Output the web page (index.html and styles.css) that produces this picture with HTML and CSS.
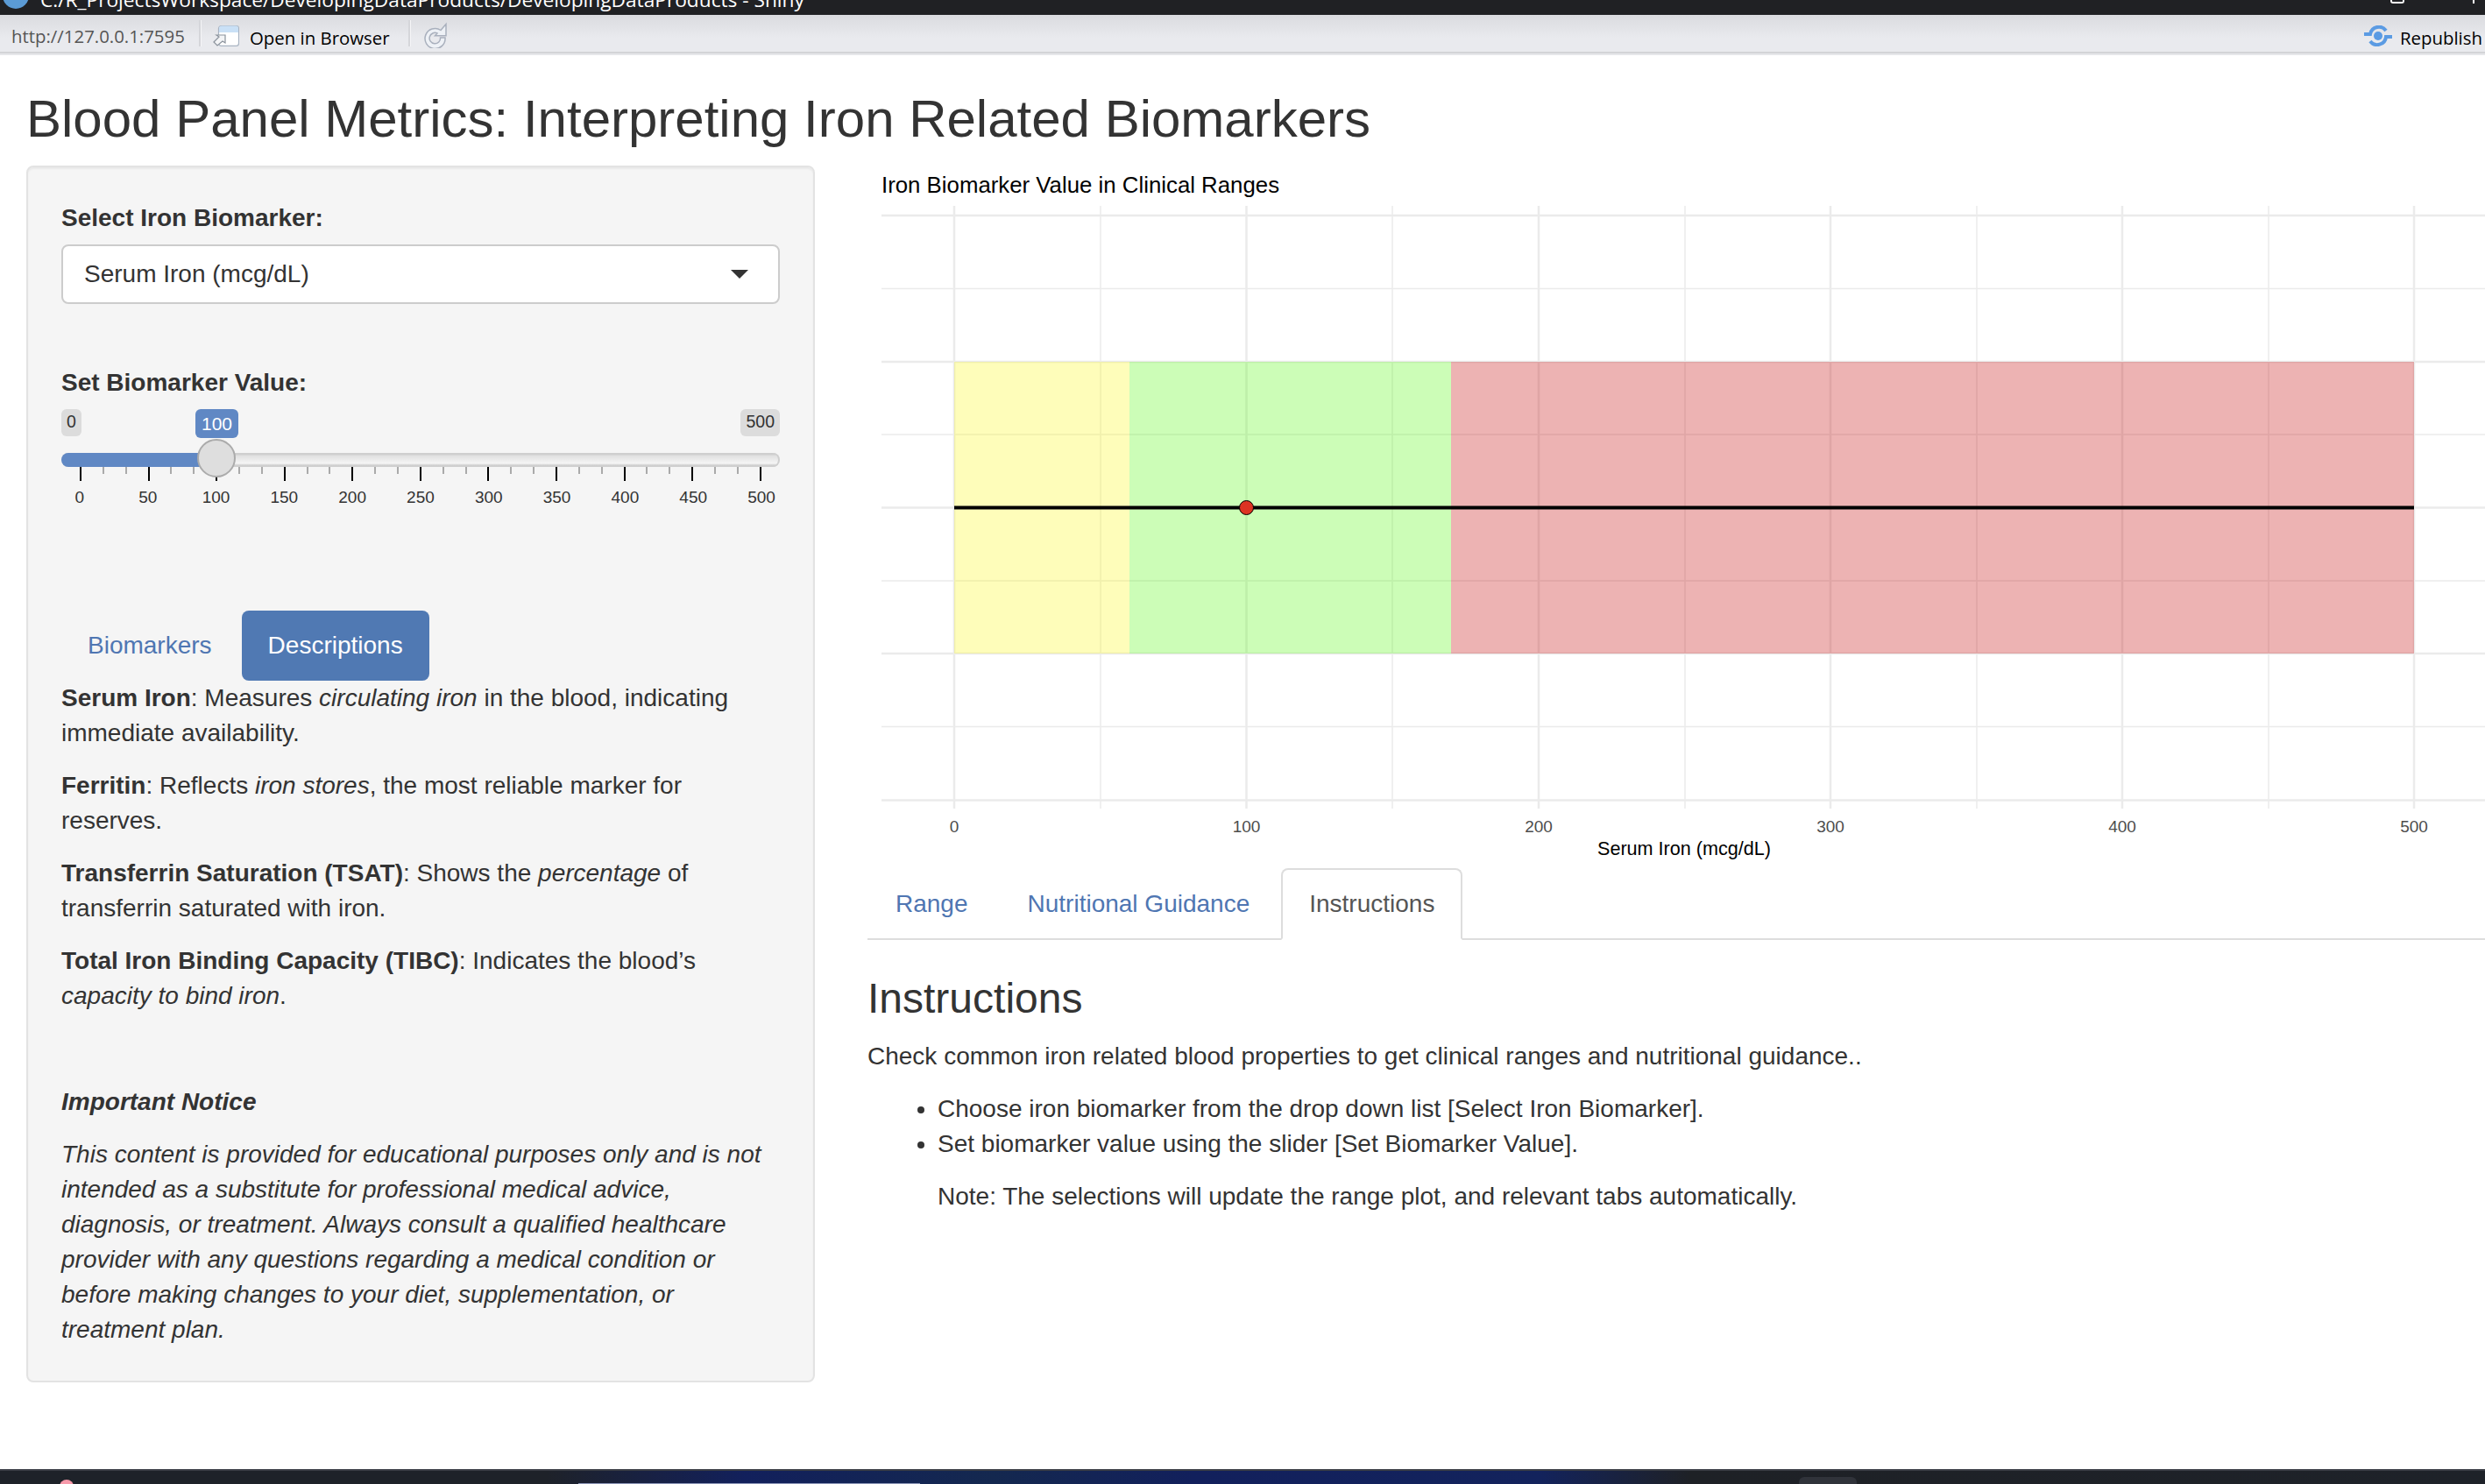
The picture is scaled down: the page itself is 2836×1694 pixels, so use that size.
FILE: index.html
```html
<!DOCTYPE html>
<html lang="en">

<head>
    <meta charset="UTF-8">
    <title>Blood Panel Metrics: Interpreting Iron Related Biomarkers</title>
    <link rel="stylesheet" href="styles.css">
</head>

<body>

    <div class="titlebar">
        <span class="app-dot"></span>
        <span class="titlebar-text">C:/R_ProjectsWorkspace/DevelopingDataProducts/DevelopingDataProducts - Shiny</span>
        <span class="win-buttons">
            <span class="win-restore"></span>
            <span class="win-close"></span>
        </span>
    </div>

    <div class="toolbar">
        <span class="tool-url">http://127.0.0.1:7595</span>
        <span class="tool-sep"></span>
        <svg class="icon-open" viewBox="0 0 30 24" width="30" height="24">
            <rect x="6.5" y="0.6" width="23" height="22.8" rx="3" fill="#fff" stroke="#a9b4c2" stroke-width="1.2"/>
            <path d="M7 3.6a3 3 0 0 1 3-3h16a3 3 0 0 1 3 3V8H7z" fill="#c9e0f6"/>
            <path d="M1 19l6-6-3-2h10v9l-3-2-6 5z" fill="#f3f4f6" stroke="#8b939c" stroke-width="1.2"/>
        </svg>
        <span class="tool-open">Open in Browser</span>
        <span class="tool-sep sep-second"></span>
        <svg class="icon-refresh" viewBox="0 0 28 30" width="28" height="30">
            <path d="M21 9.500a11.500 11.500 0 1 0 5 8.500h-5.500a6.200 6.200 0 1 1-3.500-5l-2.500 2.800H27V2.500z" fill="#eef1f6" stroke="#a9b0bd" stroke-width="1.500"/>
        </svg>
        <span class="tool-spacer"></span>
        <svg class="icon-republish" viewBox="0 0 32 24" width="32" height="24">
            <circle cx="16" cy="12" r="5" fill="#5b9be3"/>
            <path d="M0 10H7A10 10 0 0 1 25 6" fill="none" stroke="#5b9be3" stroke-width="4"/>
            <path d="M32 13H25A10 10 0 0 1 7 18" fill="none" stroke="#5b9be3" stroke-width="4"/>
        </svg>
        <span class="tool-republish">Republish</span>
    </div>

    <div class="page">
        <h2 class="page-title">Blood Panel Metrics: Interpreting Iron Related Biomarkers</h2>

        <div class="layout">
            <div class="sidebar">
                <div class="well">
                    <label class="field-label">Select Iron Biomarker:</label>
                    <div class="select-box">
                        <span>Serum Iron (mcg/dL)</span>
                        <span class="select-arrow"></span>
                    </div>

                    <label class="field-label label-slider">Set Biomarker Value:</label>
                    <div class="slider">
                        <div class="slider-ends">
                            <span class="slider-end">0</span>
                            <span class="slider-end">500</span>
                        </div>
                        <span class="slider-value">100</span>
                        <div class="slider-track">
                            <div class="slider-fill"></div>
                        </div>
                        <span class="slider-handle"></span>
                        <div class="slider-ticks">
                            <i class="major"></i><i></i><i></i>
                            <i class="major"></i><i></i><i></i>
                            <i class="major"></i><i></i><i></i>
                            <i class="major"></i><i></i><i></i>
                            <i class="major"></i><i></i><i></i>
                            <i class="major"></i><i></i><i></i>
                            <i class="major"></i><i></i><i></i>
                            <i class="major"></i><i></i><i></i>
                            <i class="major"></i><i></i><i></i>
                            <i class="major"></i><i></i><i></i>
                            <i class="major"></i>
                        </div>
                        <div class="slider-labels">
                            <span>0</span><span>50</span><span>100</span><span>150</span><span>200</span><span>250</span>
                            <span>300</span><span>350</span><span>400</span><span>450</span><span>500</span>
                        </div>
                    </div>

                    <ul class="pills">
                        <li><a href="#">Biomarkers</a></li>
                        <li class="active"><a href="#">Descriptions</a></li>
                    </ul>

                    <p><strong>Serum Iron</strong>: Measures <em>circulating iron</em> in the blood, indicating immediate availability.</p>
                    <p><strong>Ferritin</strong>: Reflects <em>iron stores</em>, the most reliable marker for reserves.</p>
                    <p><strong>Transferrin Saturation (TSAT)</strong>: Shows the <em>percentage</em> of transferrin saturated with iron.</p>
                    <p><strong>Total Iron Binding Capacity (TIBC)</strong>: Indicates the blood’s <em>capacity to bind iron</em>.</p>

                    <p class="notice-head"><strong><em>Important Notice</em></strong></p>
                    <p class="notice"><em>This content is provided for educational purposes only and is not intended as a substitute for professional medical advice, diagnosis, or treatment. Always consult a qualified healthcare provider with any questions regarding a medical condition or before making changes to your diet, supplementation, or treatment plan.</em></p>
                </div>
            </div>

            <div class="main">
                <svg class="plot" viewBox="1006 189 1830 802" width="1830" height="802">
                    <text class="plot-title" x="1006" y="220">Iron Biomarker Value in Clinical Ranges</text>

                    <g class="grid-minor">
                        <path d="M1006 329.5H2836M1006 496H2836M1006 663H2836M1006 829.5H2836"/>
                        <path d="M1256 235V923M1589 235V923M1923 235V923M2256 235V923M2589 235V923"/>
                    </g>
                    <g class="grid-major">
                        <path d="M1006 246H2836M1006 413H2836M1006 579.5H2836M1006 746H2836M1006 913.5H2836"/>
                        <path d="M1089 235V923M1422.5 235V923M1756 235V923M2089 235V923M2422 235V923M2755 235V923"/>
                    </g>

                    <rect x="1089" y="413" width="200" height="333" fill="#fcfa1c" fill-opacity="0.3"/>
                    <rect x="1289" y="413" width="367" height="333" fill="#55f80f" fill-opacity="0.3"/>
                    <rect x="1656" y="413" width="1099" height="333" fill="#c40404" fill-opacity="0.3"/>

                    <line x1="1089" y1="579.5" x2="2755" y2="579.5" stroke="#000" stroke-width="4"/>
                    <circle cx="1422.5" cy="579.5" r="8" fill="#dc3322" stroke="#000" stroke-width="1"/>

                    <g class="axis-ticks">
                        <text x="1089" y="950">0</text>
                        <text x="1422.5" y="950">100</text>
                        <text x="1756" y="950">200</text>
                        <text x="2089" y="950">300</text>
                        <text x="2422" y="950">400</text>
                        <text x="2755" y="950">500</text>
                    </g>
                    <text class="axis-title" x="1922" y="976">Serum Iron (mcg/dL)</text>
                </svg>

                <ul class="tabs">
                    <li><a href="#">Range</a></li>
                    <li><a href="#">Nutritional Guidance</a></li>
                    <li class="active"><a href="#">Instructions</a></li>
                </ul>

                <div class="tab-content">
                    <h3>Instructions</h3>
                    <p>Check common iron related blood properties to get clinical ranges and nutritional guidance..</p>
                    <ul>
                        <li>Choose iron biomarker from the drop down list [Select Iron Biomarker].</li>
                        <li>Set biomarker value using the slider [Set Biomarker Value].</li>
                    </ul>
                    <p class="note">Note: The selections will update the range plot, and relevant tabs automatically.</p>
                </div>
            </div>
        </div>
    </div>

    <div class="taskbar">
        <span class="task-pin"></span>
        <span class="task-active"></span>
        <span class="task-app"></span>
    </div>

</body>

</html>
```

FILE: styles.css
```css
* {
    box-sizing: border-box;
}

html,
body {
    margin: 0;
    height: 100%;
    overflow: hidden;
}

body {
    display: flex;
    flex-direction: column;
    font-family: "Liberation Sans", Arial, sans-serif;
    font-size: 28px;
    line-height: 40px;
    color: #333;
    background-color: #fff;
}

/* Window chrome */
.titlebar {
    height: 17px;
    flex: none;
    display: flex;
    align-items: flex-end;
    overflow: hidden;
    background-color: #202124;
    color: #fff;
}

.app-dot {
    width: 30px;
    height: 30px;
    flex: none;
    margin: 0 13px 7px 3px;
    border-radius: 50%;
    background-color: #5b9bd5;
}

.titlebar-text {
    font-family: "Open Sans", sans-serif;
    font-size: 22.7px;
    line-height: 24px;
    white-space: nowrap;
    margin-bottom: 5px;
}

.win-buttons {
    margin-left: auto;
    display: flex;
    gap: 72px;
    padding-right: 12px;
}

.win-restore {
    width: 16px;
    height: 4px;
    margin-bottom: 13px;
    border: 2px solid #fff;
    border-top: none;
    border-radius: 0 0 3px 3px;
}

.win-close {
    width: 8px;
    height: 4px;
    margin-bottom: 13px;
    border-right: 2px solid #fff;
}

.toolbar {
    height: 46px;
    flex: none;
    display: flex;
    align-items: center;
    padding: 0 3px 3px 13px;
    border-bottom: 2px solid #e6e7ea;
    box-shadow: inset 0 -2px 0 #d3d4d7;
    background: linear-gradient(#dadbdf, #e9eaee 60%);
    font-family: "Open Sans", sans-serif;
    font-size: 20.4px;
    color: #000;
}

.tool-url {
    width: 214px;
    color: #555;
    margin-top: 6px;
}

.tool-sep {
    width: 2px;
    height: 30px;
    background-color: #d5d6da;
    box-shadow: 1px 0 0 #f5f5f7;
}

.icon-open {
    margin: 6px 12px 0 14px;
}

.tool-open {
    width: 181px;
    margin-top: 10px;
}

.icon-refresh {
    margin: 4px 0 0 14px;
}

.tool-spacer {
    flex: 1;
}

.icon-republish {
    margin-top: 6px;
}

.tool-republish {
    margin: 10px 0 0 9px;
}

/* Page */
.page {
    flex: 1;
    min-height: 0;
    padding-left: 30px;
}

.page-title {
    margin: 40px 0 20px;
    font-size: 60px;
    font-weight: 400;
    line-height: 66px;
}

.layout {
    display: grid;
    grid-template-columns: 930px 1fr;
}

.sidebar {
    padding-right: 30px;
}

.well {
    height: 1389px;
    padding: 38px;
    background-color: #f5f5f5;
    border: 2px solid #e3e3e3;
    border-radius: 8px;
    box-shadow: inset 0 2px 2px rgba(0, 0, 0, 0.05);
}

.well p {
    margin: 0 0 20px;
}

.field-label {
    display: block;
    margin-bottom: 10px;
    font-weight: 700;
}

.select-box {
    height: 68px;
    display: flex;
    align-items: center;
    justify-content: space-between;
    padding: 0 34px 0 24px;
    background-color: #fff;
    border: 2px solid #ccc;
    border-radius: 8px;
}

.select-arrow {
    border-style: solid;
    border-width: 10px 10px 0;
    border-color: #333 transparent transparent;
}

.label-slider {
    margin-top: 70px;
}

/* Slider */
.slider {
    position: relative;
    height: 130px;
}

.slider-ends {
    display: flex;
    justify-content: space-between;
}

.slider-end {
    padding: 0 6px;
    height: 31px;
    font-size: 19.5px;
    line-height: 28px;
    background-color: #dcdcdc;
    border-radius: 6px;
}

.slider-value {
    position: absolute;
    left: 153px;
    top: 0;
    width: 49px;
    height: 33px;
    font-size: 21px;
    line-height: 33px;
    text-align: center;
    color: #fff;
    background-color: #6088c4;
    border-radius: 6px;
}

.slider-track {
    height: 16px;
    margin-top: 19px;
    overflow: hidden;
    border-radius: 8px;
    background: linear-gradient(#cfcfcf 2px, #e0e0e0 3px, #f5f5f5 75%, #cfcfcf 14px);
    box-shadow: inset -2px 0 0 #cfcfcf;
}

.slider-fill {
    width: 172px;
    height: 16px;
    background-color: #6088c4;
}

.slider-handle {
    position: absolute;
    left: 155px;
    top: 34px;
    width: 44px;
    height: 44px;
    background-color: #dedede;
    border: 2px solid #ababab;
    border-radius: 50%;
}

.slider-ticks {
    display: flex;
    justify-content: space-between;
    align-items: flex-start;
    margin: 0 21px;
    height: 16px;
}

.slider-ticks i {
    width: 2px;
    height: 8px;
    background-color: #aaa;
}

.slider-ticks i.major {
    height: 16px;
    background-color: #000;
}

.slider-labels {
    display: flex;
    justify-content: space-between;
    margin: 7px -18px 0;
    font-size: 19px;
    line-height: 24px;
}

.slider-labels span {
    width: 78px;
    text-align: center;
}

/* Tabs */
.pills {
    display: flex;
    gap: 4px;
    margin: 100px 0 0;
    padding: 0;
    list-style: none;
}

.pills a {
    display: block;
    padding: 20px 30px;
    color: #4f76b2;
    text-decoration: none;
    border-radius: 8px;
}

.pills .active a {
    color: #fff;
    background-color: #5079b3;
}

.well .notice-head {
    margin-top: 81px;
}

.well .notice {
    margin-bottom: 0;
}

.main {
    min-width: 0;
    padding-left: 30px;
}

.plot {
    display: block;
    margin-left: 16px;
}

.plot-title {
    font-size: 25.8px;
    fill: #000;
}

.grid-major path {
    fill: none;
    stroke: #ebebeb;
    stroke-width: 2.5;
}

.grid-minor path {
    fill: none;
    stroke: #ebebeb;
    stroke-width: 1.5;
}

.axis-ticks text {
    font-size: 19px;
    fill: #4d4d4d;
    text-anchor: middle;
}

.axis-title {
    font-size: 21.6px;
    fill: #000;
    text-anchor: middle;
}

.tabs {
    display: flex;
    gap: 4px;
    height: 82px;
    margin: 0;
    padding: 0;
    list-style: none;
    border-bottom: 2px solid #ddd;
}

.tabs a {
    display: block;
    height: 82px;
    padding: 19px 30px;
    color: #4f76b2;
    text-decoration: none;
    border: 2px solid transparent;
    border-radius: 8px 8px 0 0;
}

.tabs .active a {
    color: #555;
    background-color: #fff;
    border-color: #ddd #ddd #fff;
}

.tab-content h3 {
    margin: 40px 0 20px;
    font-size: 48px;
    font-weight: 400;
    line-height: 53px;
}

.tab-content p {
    margin: 0 0 20px;
}

.tab-content ul {
    margin: 0 0 20px;
    padding-left: 80px;
}

.tab-content .note {
    padding-left: 80px;
}

/* Windows taskbar strip */
.taskbar {
    height: 17px;
    flex: none;
    position: relative;
    overflow: hidden;
    border-top: 2px solid #3a3d45;
    background: linear-gradient(90deg, #1e2229 22%, #12205c 30%, #14284f 40%, #12205c 48%, #13235c 62%, #1e2126 68%, #1e2229);
}

.task-pin {
    position: absolute;
    left: 68px;
    top: 10px;
    width: 16px;
    height: 16px;
    border-radius: 50%;
    background-color: #f79aaa;
}

.task-active {
    position: absolute;
    left: 660px;
    top: 14px;
    width: 390px;
    height: 4px;
    background-color: #8d97b8;
}

.task-app {
    position: absolute;
    left: 2053px;
    top: 7px;
    width: 66px;
    height: 12px;
    border-radius: 6px 6px 0 0;
    background-color: #30333a;
}
```
